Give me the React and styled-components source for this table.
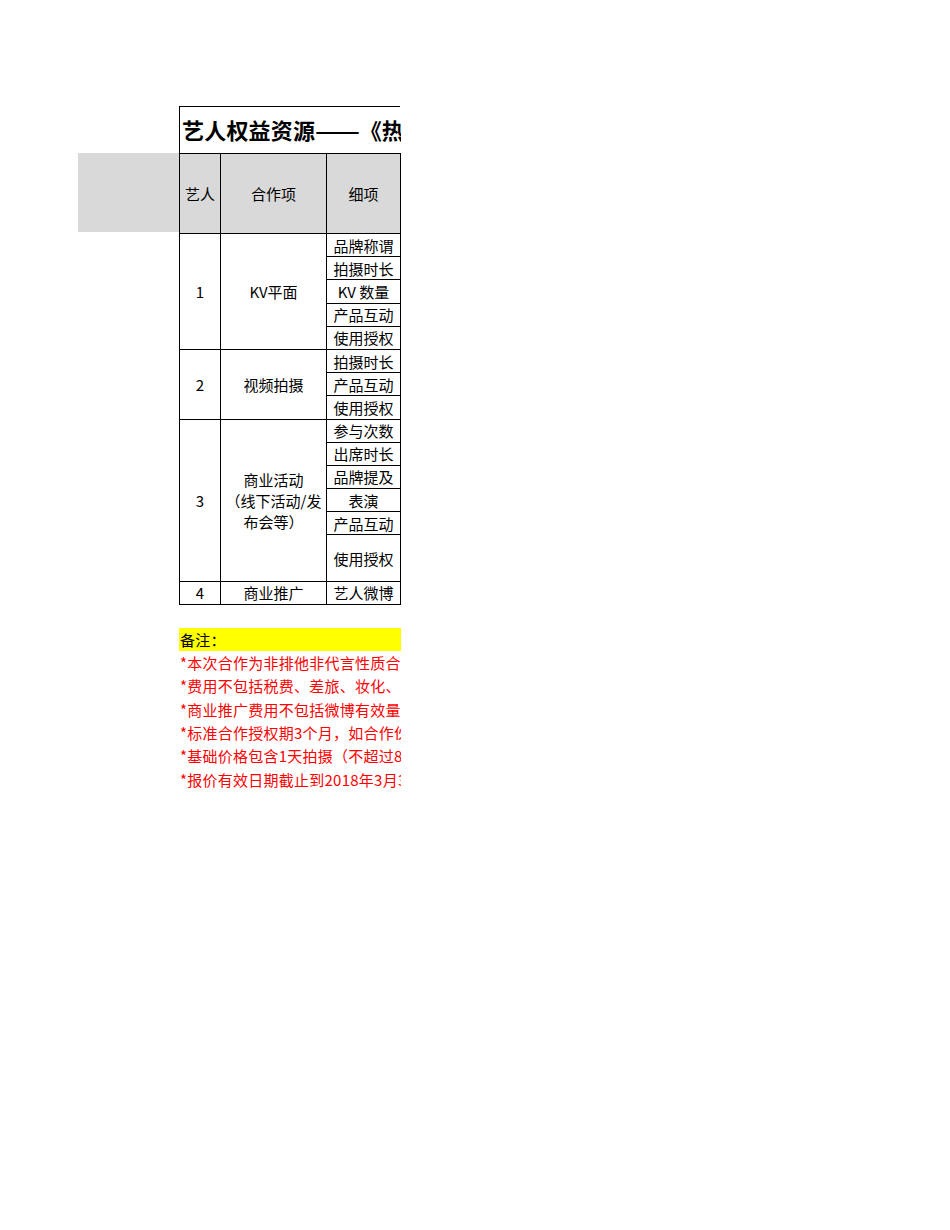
import styled, { createGlobalStyle } from "styled-components";

const GlobalStyle = createGlobalStyle`
  html, body {
    margin: 0;
    padding: 0;
    background: #ffffff;
  }
  body {
    font-family: "Noto Sans CJK SC", "Noto Sans", sans-serif;
    color: #000000;
  }
`;

const Page = styled.div`
  display: flex;
  width: 950px;
  min-height: 1230px;
  padding: 106px 0 0 78px;
  box-sizing: border-box;
`;

const Gutter = styled.div`
  width: 101px;
  flex-shrink: 0;
  padding-top: 47px;
`;

const GrayBand = styled.div`
  height: 79px;
  background: #d9d9d9;
`;

const Sheet = styled.div`
  width: 222px;
  overflow: hidden;
  display: flex;
  flex-direction: column;
`;

const Grid = styled.div`
  display: grid;
  grid-template-columns: 41px 106px 74px;
  grid-template-rows: 47px 80px repeat(13, 23.2px) 46.2px 23.2px;
  border-top: 1px solid #000;
  border-left: 1px solid #000;
  width: 221px;
  box-sizing: border-box;
`;

const Cell = styled.div`
  box-sizing: border-box;
  display: flex;
  align-items: center;
  justify-content: center;
  text-align: center;
  font-size: 15px;
  line-height: 21px;
  border-right: 1px solid #000;
  border-bottom: 1px solid #000;
  background: ${(p) => (p.$head ? "#d9d9d9" : "#ffffff")};
  grid-column: ${(p) => p.$col};
  grid-row: ${(p) => p.$row};
  white-space: nowrap;
`;

const Title = styled.div`
  grid-column: 1 / -1;
  grid-row: 1;
  display: flex;
  align-items: center;
  padding-left: 2px;
  padding-bottom: 3px;
  font-size: 22px;
  font-weight: 700;
  white-space: nowrap;
  border-bottom: 1px solid #000;
  box-sizing: border-box;
  letter-spacing: 0.2px;
`;

const Dash = styled.span`
  display: inline-block;
  letter-spacing: 0;
  transform: scaleX(1.2);
  transform-origin: left center;
  margin-right: 7px;
`;

const Notes = styled.div`
  margin-top: 23px;
  display: flex;
  flex-direction: column;
`;

const NoteLine = styled.div`
  height: 23.3px;
  line-height: 23.3px;
  font-size: 15px;
  letter-spacing: 0.25px;
  white-space: nowrap;
  padding-left: 1px;
  color: ${(p) => (p.$label ? "#000000" : "#ff0000")};
  background: ${(p) => (p.$label ? "#ffff00" : "transparent")};
`;

const groups = [
  { no: "1", name: "KV平面", items: ["品牌称谓", "拍摄时长", "KV 数量", "产品互动", "使用授权"] },
  { no: "2", name: "视频拍摄", items: ["拍摄时长", "产品互动", "使用授权"] },
  {
    no: "3",
    name: (
      <>
        商业活动
        <br />
        （线下活动/发
        <br />
        布会等）
      </>
    ),
    items: ["参与次数", "出席时长", "品牌提及", "表演", "产品互动", "使用授权"],
  },
  { no: "4", name: "商业推广", items: ["艺人微博"] },
];

const notes = [
  "*本次合作为非排他非代言性质合作，艺人不得以代言人身份出现",
  "*费用不包括税费、差旅、妆化、造型、安保等相关费用",
  "*商业推广费用不包括微博有效量数据推广费用",
  "*标准合作授权期3个月，如合作伙伴需延长授权期需另行协商",
  "*基础价格包含1天拍摄（不超过8小时）",
  "*报价有效日期截止到2018年3月31日",
];

export default function App() {
  let row = 3;
  const cells = [];
  groups.forEach((g, gi) => {
    const start = row;
    const end = row + g.items.length;
    cells.push(
      <Cell key={`no${gi}`} $col="1" $row={`${start} / ${end}`}>
        {g.no}
      </Cell>
    );
    cells.push(
      <Cell key={`nm${gi}`} $col="2" $row={`${start} / ${end}`}>
        <span>{g.name}</span>
      </Cell>
    );
    g.items.forEach((it, ii) => {
      cells.push(
        <Cell key={`it${gi}-${ii}`} $col="3" $row={`${row + ii}`}>
          {it}
        </Cell>
      );
    });
    row = end;
  });

  return (
    <>
      <GlobalStyle />
      <Page lang="zh-CN">
        <Gutter>
          <GrayBand />
        </Gutter>
        <Sheet>
          <Grid>
            <Title>
              艺人权益资源<Dash>——</Dash>《热血街舞团》
            </Title>
            <Cell $head $col="1" $row="2">艺人</Cell>
            <Cell $head $col="2" $row="2">合作项</Cell>
            <Cell $head $col="3" $row="2">细项</Cell>
            {cells}
          </Grid>
          <Notes>
            <NoteLine $label>备注：</NoteLine>
            {notes.map((n, i) => (
              <NoteLine key={i}>{n}</NoteLine>
            ))}
          </Notes>
        </Sheet>
      </Page>
    </>
  );
}
